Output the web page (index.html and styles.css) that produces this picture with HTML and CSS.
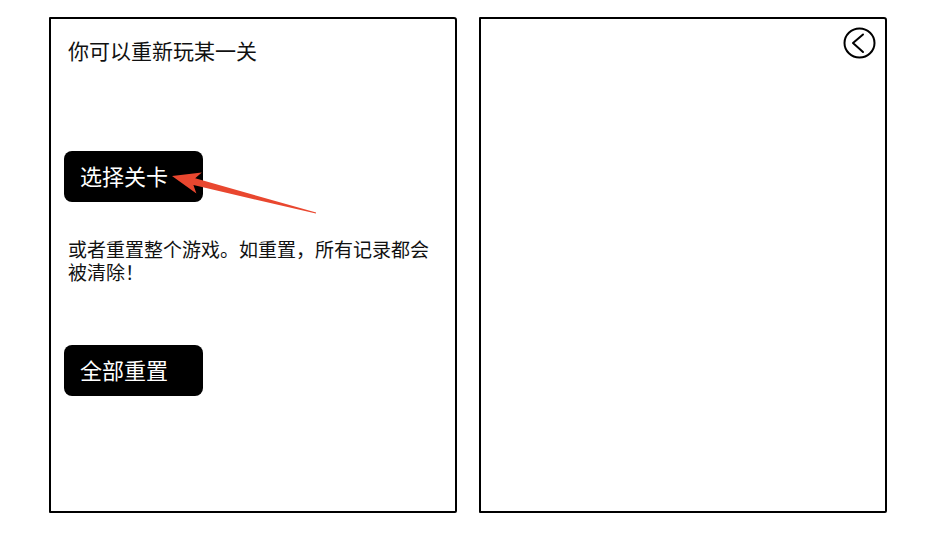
FILE: index.html
```html
<!DOCTYPE html>
<html>
<head>
  <meta charset="UTF-8">
  <title>重新开始</title>
  <link rel="stylesheet" href="styles.css">
</head>
<body>
  <div class="screens">
    <!-- 左侧：重玩 / 重置 -->
    <div class="panel">
      <h2 class="title">你可以重新玩某一关</h2>
      <button class="btn btn-select" type="button">选择关卡</button>
      <p class="note">或者重置整个游戏。如重置，所有记录都会被清除！</p>
      <button class="btn btn-reset" type="button">全部重置</button>

      <!-- 提示箭头 -->
      <svg class="hint-arrow" width="160" height="60" viewBox="0 0 160 60">
        <polygon fill="#e9472f" points="11,12 40.8,8.4 34.2,14.3 155.1,48.4 154.9,49.6 32.4,21.1 35.4,29.6"/>
      </svg>
    </div>

    <!-- 右侧：关卡列表（空） -->
    <div class="panel">
      <button class="back" type="button" aria-label="返回">
        <svg width="33" height="32" viewBox="0 0 33 32">
          <ellipse cx="16.5" cy="16" rx="15" ry="14.5" fill="none" stroke="#000" stroke-width="2"/>
          <path d="M20 7.5 L10 16 L20 25" fill="none" stroke="#000" stroke-width="2" stroke-linecap="round" stroke-linejoin="round"/>
        </svg>
      </button>
    </div>
  </div>
</body>
</html>
```

FILE: styles.css
```css
/* Reset & basic styling */
* { box-sizing: border-box; }
body {
  margin: 0;
  padding: 0;
  font-family: "Noto Sans CJK SC", "Noto Sans", sans-serif;
  background: #fff;
  color: #111;
}
.screens {
  display: flex;
  gap: 22px;
  padding: 17px 0 0 49px;
}
/* Sketchy phone frame */
.panel {
  position: relative;
  width: 408px;
  height: 496px;
  border: 2px solid #000;
  border-radius: 1px 3px 2px 1px;
  padding: 17px 20px 0 13px;
  display: flex;
  flex-direction: column;
  align-items: flex-start;
}
.title {
  margin: 0;
  padding-left: 4px;
  font-size: 21px;
  font-weight: normal;
  line-height: 29px;
}
.btn {
  width: 139px;
  height: 51px;
  padding: 0 0 3px 16px;
  border: none;
  border-radius: 8px;
  background: #000;
  color: #fff;
  font-family: inherit;
  font-size: 22px;
  line-height: 48px;
  text-align: left;
  cursor: pointer;
}
.btn-select { margin-top: 86px; }
.btn-reset { margin-top: 62px; }
.note {
  margin: 35px 0 0;
  padding-left: 4px;
  font-size: 19px;
  line-height: 23px;
}
.hint-arrow {
  position: absolute;
  left: 110px;
  top: 145px;
}
.back {
  position: absolute;
  top: 8px;
  right: 9px;
  padding: 0;
  border: none;
  background: none;
  cursor: pointer;
  line-height: 0;
}
```
